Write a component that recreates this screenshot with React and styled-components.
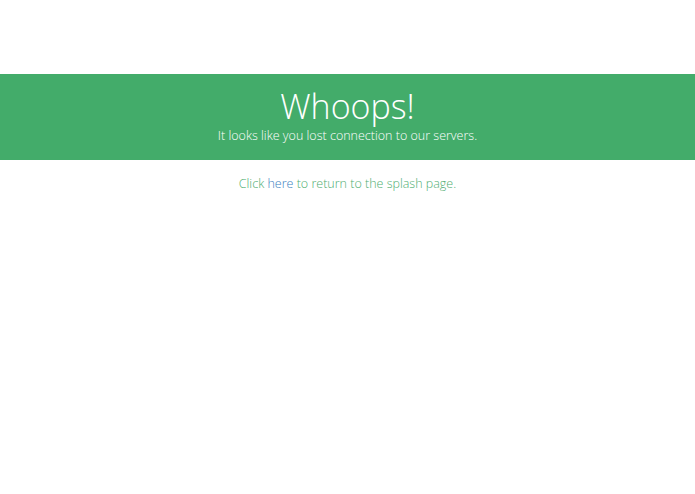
import React from 'react'
import styled, { createGlobalStyle } from 'styled-components'

const GlobalStyle = createGlobalStyle`
  html, body {
    margin: 0;
    padding: 0;
    background: #ffffff;
    font-family: "Open Sans", "Liberation Sans", sans-serif;
  }
`

const App = () => {
  return (
    <Page>
      <GlobalStyle />
      <Banner>
        <Title>Whoops!</Title>
        <Subtitle>It looks like you lost connection to our servers.</Subtitle>
      </Banner>
      <Message>
        Click <Link href="#">here</Link> to return to the splash page.
      </Message>
    </Page>
  )
}

export default App

const Page = styled.div`
  padding-top: 74px;
`

const Banner = styled.div`
  background: #43ac6a;
  height: 86px;
  box-sizing: border-box;
  padding-top: 13px;
  text-align: center;
  color: #ffffff;
`

const Title = styled.h1`
  margin: 0;
  font-weight: 300;
  font-size: 34px;
  line-height: 39px;
`

const Subtitle = styled.p`
  margin: 0;
  font-weight: 300;
  font-size: 12.5px;
  line-height: 20px;
`

const Message = styled.p`
  margin: 14px 0 0;
  text-align: center;
  font-weight: 300;
  font-size: 12.5px;
  line-height: 20px;
  color: #4fae72;
`

const Link = styled.a`
  color: #3a80c0;
  text-decoration: none;
`
